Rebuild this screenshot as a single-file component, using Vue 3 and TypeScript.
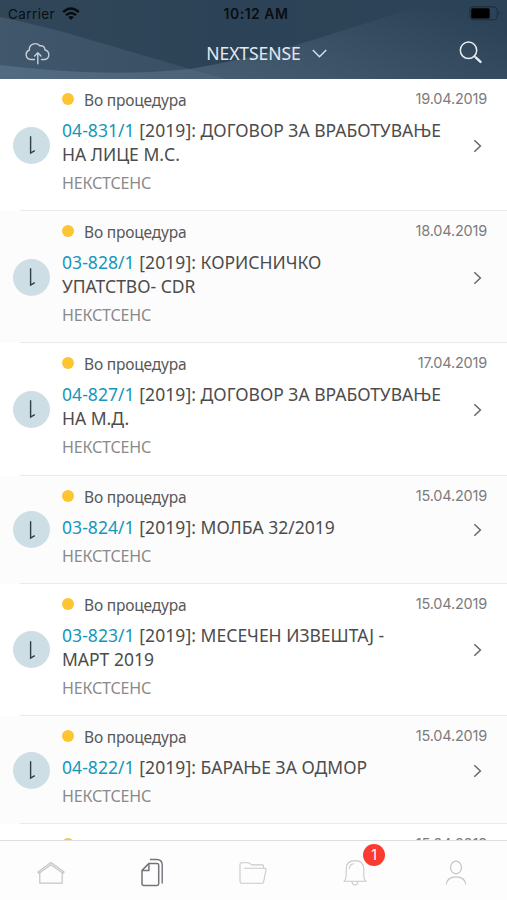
<script setup lang="ts">
interface Doc {
  code: string
  lines: string[]
  date: string
}

const docs: Doc[] = [
  { code: '04-831/1', lines: ['ДОГОВОР ЗА ВРАБОТУВАЊЕ', 'НА ЛИЦЕ М.С.'], date: '19.04.2019' },
  { code: '03-828/1', lines: ['КОРИСНИЧКО', 'УПАТСТВО- CDR'], date: '18.04.2019' },
  { code: '04-827/1', lines: ['ДОГОВОР ЗА ВРАБОТУВАЊЕ', 'НА М.Д.'], date: '17.04.2019' },
  { code: '03-824/1', lines: ['МОЛБА 32/2019'], date: '15.04.2019' },
  { code: '03-823/1', lines: ['МЕСЕЧЕН ИЗВЕШТАЈ -', 'МАРТ 2019'], date: '15.04.2019' },
  { code: '04-822/1', lines: ['БАРАЊЕ ЗА ОДМОР'], date: '15.04.2019' },
]
const nextDate = '15.04.2019'
</script>

<template>
  <div class="screen">
    <header class="header">
      <svg class="header-bg" viewBox="0 0 507 79" preserveAspectRatio="none">
        <defs>
          <linearGradient id="base" x1="0" y1="0" x2="1" y2="0">
            <stop offset="0" stop-color="#314759" />
            <stop offset="0.45" stop-color="#2c4256" />
            <stop offset="1" stop-color="#2e4558" />
          </linearGradient>
          <linearGradient id="left" x1="0" y1="0" x2="1" y2="0">
            <stop offset="0" stop-color="#40576c" />
            <stop offset="1" stop-color="#384f62" />
          </linearGradient>
          <linearGradient id="right" x1="0" y1="1" x2="1" y2="0.35">
            <stop offset="0" stop-color="#485f73" />
            <stop offset="0.45" stop-color="#3b5267" />
            <stop offset="1" stop-color="#2c4257" />
          </linearGradient>
          <linearGradient id="low" x1="0" y1="0" x2="1" y2="0">
            <stop offset="0" stop-color="#536b81" />
            <stop offset="1" stop-color="#4b6277" />
          </linearGradient>
        </defs>
        <rect width="507" height="79" fill="url(#base)" />
        <path d="M0 17 Q20 21 60 31 L190 69 L228 79 H0Z" fill="url(#left)" />
        <path d="M190 69 Q245 60 303 43 L402 12 Q430 4 450 0 H507 V79 H228Z" fill="url(#right)" />
        <path d="M0 65 Q105 78 190 69 L228 79 H0Z" fill="url(#low)" />
      </svg>
      <div class="status-bar">
        <div class="carrier">
          <span class="carrier-name">Carrier</span>
          <svg width="18" height="14" viewBox="0 0 18 14">
            <g fill="none" stroke="#080c10" stroke-width="2.4">
              <path d="M1.2 5 Q9 -1.9 16.8 5" />
              <path d="M4 8.2 Q9 3.8 14 8.2" />
            </g>
            <path d="M9 13 L6.2 10.1 Q9 7.9 11.8 10.1Z" fill="#080c10" />
          </svg>
        </div>
        <span class="clock">10:12 AM</span>
        <svg class="battery" width="32" height="15" viewBox="0 0 32 15">
          <rect x="0.8" y="0.8" width="27.5" height="13" rx="3.5" fill="none" stroke="#1d2c39" />
          <rect x="2.2" y="2.2" width="18.5" height="10.2" rx="1.5" fill="#000" />
          <path d="M29.6 5 Q31.5 7.3 29.6 9.6Z" fill="#1d2c39" />
        </svg>
      </div>
      <div class="nav-bar">
        <svg class="cloud" width="26" height="23" viewBox="0 0 26 23" fill="none" stroke="#c6d0da" stroke-width="1.4" stroke-linecap="round" stroke-linejoin="round">
          <path d="M9.5 17.5 H5.8 A4.8 4.8 0 0 1 4.3 8.2 A6 6 0 0 1 14.8 3.8 Q19.4 3.1 20.1 8 A4.9 4.9 0 0 1 20.1 17.5 H16.5" />
          <path d="M12.8 21.8 V11.2 M9.6 13.9 L12.8 10.8 L16 13.9" />
        </svg>
        <div class="picker">
          <span class="org">NEXTSENSE</span>
          <svg width="15" height="9" viewBox="0 0 15 9" fill="none" stroke="#dbe2e8" stroke-width="1.4">
            <path d="M0.8 1 L7.5 7.8 L14.2 1" />
          </svg>
        </div>
        <svg class="search" width="24" height="24" viewBox="0 0 24 24" fill="none" stroke="#e8edf1" stroke-linecap="round">
          <circle cx="9.5" cy="9.3" r="8.2" stroke-width="1.5" />
          <path d="M15.3 15.1 L17 16.8" stroke-width="1.5" />
          <path d="M17 16.7 L21.5 20.9" stroke-width="2.4" />
        </svg>
      </div>
    </header>

    <main class="list">
      <article v-for="doc in docs" :key="doc.code" class="row">
        <div class="badge">
          <svg width="8" height="20" viewBox="0 0 8 20" fill="none" stroke="#2e4047" stroke-width="1.4">
            <path d="M2.6 1.2 V18 L6.8 15.6" />
          </svg>
        </div>
        <div class="body">
          <div class="state"><i class="dot"></i><span>Во процедура</span></div>
          <div class="title">
            <div><span class="ref"><span class="code">{{ doc.code }}</span> [2019]: </span>{{ doc.lines[0] }}</div>
            <div v-for="line in doc.lines.slice(1)" :key="line">{{ line }}</div>
          </div>
          <div class="company">НЕКСТСЕНС</div>
        </div>
        <div class="side">
          <time class="date">{{ doc.date }}</time>
          <svg class="chevron" width="9" height="14" viewBox="0 0 9 14" fill="none" stroke="#686868" stroke-width="1.5">
            <path d="M1.3 1.2 L7.4 7 L1.3 12.8" />
          </svg>
        </div>
      </article>
      <article class="row peek">
        <i class="dot"></i>
        <time class="date">{{ nextDate }}</time>
      </article>
    </main>

    <nav class="tabs">
      <div class="tab">
        <svg width="28" height="24" viewBox="0 0 28 24" fill="none" stroke="#c5c5c5" stroke-width="1.2" stroke-linejoin="round">
          <path d="M0.9 11.1 L14 1.5 L27.1 11.1 L26 12.3 L14 3.7 L2 12.3Z" />
          <path d="M2.8 12 V22.2 H25.2 V12" />
        </svg>
      </div>
      <div class="tab">
        <svg width="24" height="30" viewBox="0 0 24 30" fill="none" stroke="#73737c" stroke-width="1.5" stroke-linejoin="round">
          <path d="M9 5.4 H17 Q18.7 5.4 18.7 7.1 V25.8 Q18.7 27.5 17 27.5 H3.7 Q2 27.5 2 25.8 V12.4Z" />
          <path d="M2.3 12.4 H8.9 V5.4" />
          <path d="M10 1.5 H16.8 Q22.2 1.5 22.2 6.9 V25.5" stroke-width="1.4" />
        </svg>
      </div>
      <div class="tab">
        <svg width="28" height="24" viewBox="0 0 28 24" fill="none" stroke="#c9c9c9" stroke-width="1.1" stroke-linejoin="round">
          <path d="M24.6 7.1 V5.4 Q24.6 3.9 23 3.9 H12.5 L10 1.8 H2.5 Q1 1.8 1 3.3 V20.5 Q1 22.2 2.8 22.2 H22.8 Q24.3 22.2 24.6 20.8 L27 9 Q27.2 7.2 25.5 7.2 H5" />
        </svg>
      </div>
      <div class="tab alerts">
        <svg width="24" height="27" viewBox="0 0 24 27" fill="none" stroke="#c9c9c9" stroke-width="1.1" stroke-linejoin="round" stroke-linecap="round">
          <path d="M1 22.2 Q3.2 20.3 3.2 16.5 V10 Q3.2 1.6 12 1.6 Q20.8 1.6 20.8 10 V16.5 Q20.8 20.3 23 22.2Z" />
          <path d="M9 22.5 Q9.5 26 12 26 Q14.5 26 15 22.5 M6.2 9.5 Q6.8 5.8 10.3 4.8" />
        </svg>
        <span class="count">1</span>
      </div>
      <div class="tab">
        <svg width="22" height="25" viewBox="0 0 22 25" fill="none" stroke="#c5c5c5" stroke-width="1.2" stroke-linecap="round">
          <ellipse cx="11" cy="7.5" rx="5.5" ry="6.3" />
          <path d="M1.3 23.8 C2 14.6 20 14.6 20.7 23.8" />
        </svg>
      </div>
    </nav>
  </div>
</template>

<style>
body {
  margin: 0;
}
</style>

<style scoped>
.screen {
  width: 507px;
  height: 900px;
  display: flex;
  flex-direction: column;
  overflow: hidden;
  background: #fff;
  font-family: 'Noto Sans', 'Open Sans', sans-serif;
}
.header {
  position: relative;
  flex: none;
  height: 79px;
}
.header-bg {
  position: absolute;
  inset: 0;
  width: 100%;
  height: 100%;
}
.status-bar {
  position: relative;
  display: grid;
  grid-template-columns: 1fr auto 1fr;
  align-items: center;
  height: 27px;
  padding: 0 6px 0 8px;
  color: #0a0e12;
  font-family: Inter, sans-serif;
}
.carrier {
  display: flex;
  align-items: center;
  gap: 7px;
}
.carrier-name {
  font-size: 13.5px;
  letter-spacing: 0.4px;
}
.clock {
  padding-left: 3px;
  font-size: 14px;
  font-weight: 600;
  letter-spacing: 0.5px;
}
.battery {
  justify-self: end;
}
.nav-bar {
  position: relative;
  display: grid;
  grid-template-columns: 1fr auto 1fr;
  align-items: center;
  height: 52px;
  padding: 0 24px 0 25px;
}
.picker {
  display: flex;
  align-items: center;
  gap: 11px;
  padding-left: 25px;
  color: #e3e9ee;
  font-size: 17.5px;
}
.org {
  letter-spacing: -0.05px;
}
.search {
  justify-self: end;
}
.list {
  flex: none;
  height: 761px;
  overflow: hidden;
}
.row {
  position: relative;
  display: flex;
  padding: 10px 20px 15.24px 13px;
  background: #fff;
}
.row:nth-child(even) {
  background: #fcfcfc;
}
.row::after {
  content: '';
  position: absolute;
  left: 20px;
  right: 0;
  bottom: 0;
  height: 1px;
  background: #ebebeb;
}
.badge {
  flex: none;
  align-self: center;
  width: 37px;
  height: 37px;
  margin: 5px 12px 0 0;
  border-radius: 50%;
  background: #cddfe4;
  display: flex;
  align-items: center;
  justify-content: center;
}
.body {
  flex: 1;
  min-width: 0;
  white-space: nowrap;
}
.state {
  display: flex;
  align-items: center;
  gap: 10px;
  height: 22px;
  margin-bottom: 1px;
  color: #585858;
  font-size: 15.5px;
  letter-spacing: -0.18px;
}
.dot {
  width: 12px;
  height: 12px;
  margin-top: -2px;
  border-radius: 50%;
  background: #fdc530;
}
.title {
  padding-top: 6px;
  color: #4c4c4c;
  font-size: 17.5px;
  line-height: 24px;
}
.ref {
  letter-spacing: 0.06px;
}
.code {
  color: #1597bb;
}
.company {
  margin-top: 5px;
  height: 25px;
  line-height: 24px;
  color: #8a8a8a;
  font-size: 16px;
  letter-spacing: -0.15px;
}
.side {
  flex: none;
  width: 71px;
  margin-left: -15px;
  display: flex;
  flex-direction: column;
  align-items: flex-end;
}
.date {
  height: 20px;
  line-height: 20px;
  color: #7c7c7c;
  font-family: Inter, sans-serif;
  font-size: 14.5px;
  letter-spacing: -0.2px;
  white-space: nowrap;
}
.chevron {
  margin: auto 5px;
  position: relative;
  top: -7px;
}
.peek {
  justify-content: space-between;
  padding-left: 62px;
}
.peek .dot {
  margin-top: 3.8px;
}
.tabs {
  flex: none;
  box-sizing: border-box;
  height: 60px;
  border-top: 1px solid #dedede;
  background: #fdfdfd;
  display: grid;
  grid-template-columns: repeat(5, 1fr);
}
.tab {
  display: flex;
  align-items: center;
  justify-content: center;
  padding-top: 4px;
}
.alerts {
  position: relative;
}
.count {
  position: absolute;
  left: 59px;
  top: 3px;
  width: 22px;
  height: 22px;
  border-radius: 50%;
  background: #fb3b30;
  color: #fff;
  font-family: Inter, sans-serif;
  font-size: 14px;
  line-height: 22px;
  text-align: center;
}
</style>
